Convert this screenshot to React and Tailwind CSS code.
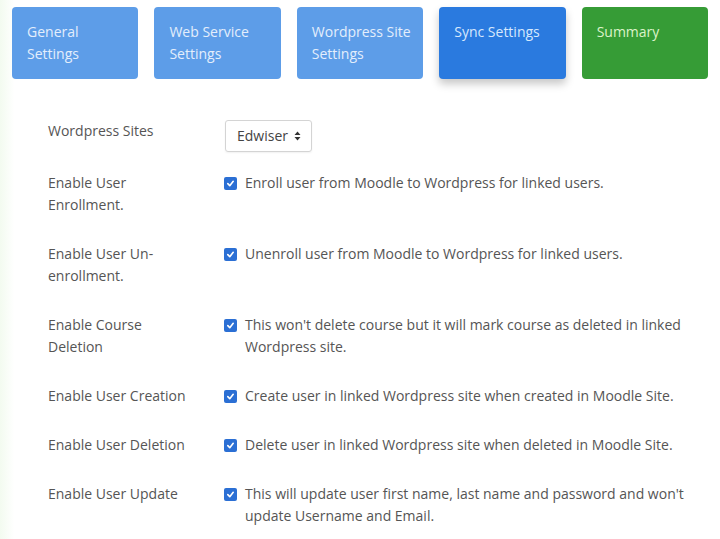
const tabs = [
  { label: 'General Settings', cls: 'bg-[#5d9de8] text-[#e3eefc]' },
  { label: 'Web Service Settings', cls: 'bg-[#5d9de8] text-[#e3eefc]' },
  { label: 'Wordpress Site Settings', cls: 'bg-[#5d9de8] text-[#e3eefc]' },
  { label: 'Sync Settings', cls: 'bg-[#2a7adf] text-[#d6e8fd] shadow-[0_5px_8px_rgba(0,0,0,0.22)]' },
  { label: 'Summary', cls: 'bg-[#369c36] text-[#dcf3c9]' },
];

const rows = [
  { label: 'Enable User Enrollment.', text: 'Enroll user from Moodle to Wordpress for linked users.' },
  { label: 'Enable User Un-enrollment.', text: 'Unenroll user from Moodle to Wordpress for linked users.' },
  { label: 'Enable Course Deletion', text: "This won't delete course but it will mark course as deleted in linked Wordpress site." },
  { label: 'Enable User Creation', text: 'Create user in linked Wordpress site when created in Moodle Site.' },
  { label: 'Enable User Deletion', text: 'Delete user in linked Wordpress site when deleted in Moodle Site.' },
  { label: 'Enable User Update', text: "This will update user first name, last name and password and won't update Username and Email." },
];

const Check = () => (
  <span className="mt-[5px] w-[13px] h-[13px] shrink-0 rounded-[2px] bg-[#2b6fd4] flex items-center justify-center">
    <svg width="9" height="9" viewBox="0 0 10 10">
      <path d="M2 5.2 L4.2 7.4 L8 2.6" fill="none" stroke="#fff" strokeWidth="1.8" strokeLinecap="round" strokeLinejoin="round" />
    </svg>
  </span>
);

export default function App() {
  return (
    <div className="w-[720px] h-[539px] overflow-hidden bg-white bg-gradient-to-r from-[#f3fbf0] via-white via-[2%] to-white font-['Open_Sans',sans-serif] text-[14px] leading-[22px]">
      {/* Tabs */}
      <div className="flex gap-4 px-3 pt-[7px]">
        {tabs.map((t) => (
          <div key={t.label} className={`flex-1 h-[72px] rounded-[4px] pl-[15px] pr-2 pt-[14px] ${t.cls}`}>
            <div className="w-[100px] leading-[22px]">{t.label}</div>
          </div>
        ))}
      </div>

      {/* Form */}
      <div className="pl-[48px] pr-[28px] pt-[41px]">
        <div className="flex items-start mb-[20px]">
          <div className="w-[177px] shrink-0 text-[#555]">Wordpress Sites</div>
          <div className="flex items-center gap-[6px] h-[32px] pl-[11px] pr-[10px] border border-[#d4d4d4] rounded-[3px] text-[#444] shadow-[0_1px_2px_rgba(0,0,0,0.06)]">
            <span>Edwiser</span>
            <svg width="7" height="10" viewBox="0 0 7 10">
              <path d="M3.5 0.5 L6.5 4 L0.5 4 Z M3.5 9.5 L6.5 6 L0.5 6 Z" fill="#333" />
            </svg>
          </div>
        </div>

        {rows.map((r) => (
          <div key={r.label} className="flex items-start mb-[27px]">
            <div className="w-[176px] shrink-0 pr-[30px] text-[#555]">{r.label}</div>
            <div className="flex items-start gap-[8px] text-[#555]">
              <Check />
              <span>{r.text}</span>
            </div>
          </div>
        ))}
      </div>
    </div>
  );
}
